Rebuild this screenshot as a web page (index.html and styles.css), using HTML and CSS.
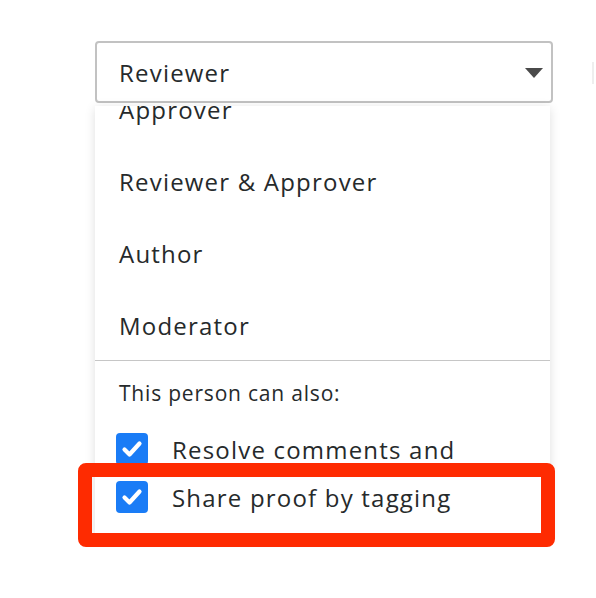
FILE: index.html
```html
<!DOCTYPE html>
<html lang="en">
<head>
    <meta charset="UTF-8">
    <meta name="viewport" content="width=device-width, initial-scale=1.0">
    <title>Role picker</title>
    <link rel="stylesheet" href="styles.css">
</head>
<body>
    <div class="stage">
        <div class="top-row">
            <div class="role-select">
                <span class="role-select-value">Reviewer</span>
                <span class="role-select-arrow"></span>
            </div>
            <div class="edge-stub"></div>
        </div>

        <div class="role-menu">
            <div class="role-list-viewport">
                <ul class="role-list">
                    <li>Approver</li>
                    <li>Reviewer &amp; Approver</li>
                    <li>Author</li>
                    <li>Moderator</li>
                </ul>
            </div>

            <div class="role-extras">
                <p class="extras-title">This person can also:</p>
                <label class="extra-option">
                    <span class="check-box">
                        <svg viewBox="0 0 32 32" width="32" height="32"><polyline points="8.5,16.5 13.5,21.5 23.5,10.5" /></svg>
                    </span>
                    <span>Resolve comments and</span>
                </label>
                <label class="extra-option">
                    <span class="check-box">
                        <svg viewBox="0 0 32 32" width="32" height="32"><polyline points="8.5,16.5 13.5,21.5 23.5,10.5" /></svg>
                    </span>
                    <span>Share proof by tagging</span>
                </label>
            </div>

            <!-- annotation highlight -->
            <div class="highlight"></div>
        </div>
    </div>
</body>
</html>
```

FILE: styles.css
```css
* {
    margin: 0;
    padding: 0;
    box-sizing: border-box;
}

html, body {
    min-height: 100%;
}

body {
    font-family: "Open Sans", Lato, sans-serif;
    background: #ffffff;
    color: #262a2b;
    min-height: 100vh;
}

.stage {
    padding: 41px 0 0 95px;
    min-height: 598px;
}

.top-row {
    display: flex;
    align-items: flex-start;
}

.role-select {
    width: 458px;
    height: 62px;
    border: 2px solid #c2c2c2;
    border-radius: 4px;
    display: flex;
    align-items: center;
    justify-content: space-between;
    padding: 0 8px 0 22px;
}

.role-select-value {
    font-size: 24px;
    letter-spacing: 1.2px;
}

.role-select-arrow {
    width: 0;
    height: 0;
    border-left: 9.5px solid transparent;
    border-right: 9.5px solid transparent;
    border-top: 10px solid #4a4a4a;
    margin-top: 2px;
}

.edge-stub {
    width: 2px;
    height: 22px;
    margin: 21px 0 0 39px;
    background: #eeeeee;
}

.role-menu {
    position: relative;
    width: 455px;
    margin-top: 3px;
    height: 430px;
    background: #ffffff;
    box-shadow: 0 2px 10px rgba(0, 0, 0, 0.13);
}

.role-list-viewport {
    height: 255px;
    overflow: hidden;
    border-bottom: 1px solid #c6c6c6;
}

.role-list {
    list-style: none;
    margin-top: -33px;
}

.role-list li {
    height: 72px;
    display: flex;
    align-items: center;
    padding-left: 24px;
    font-size: 24px;
    letter-spacing: 1.2px;
}

.role-extras {
    padding: 20px 0 0 21px;
}

.extras-title {
    font-size: 21px;
    line-height: 24px;
    letter-spacing: 0.8px;
    padding-left: 3px;
    margin-bottom: 28px;
}

.extra-option {
    display: flex;
    align-items: center;
    gap: 24px;
    height: 32px;
    margin-bottom: 16px;
    font-size: 24px;
    letter-spacing: 1.2px;
}

.check-box {
    width: 32px;
    height: 32px;
    border-radius: 4px;
    background: #1a7cf6;
    display: flex;
}

.check-box polyline {
    fill: none;
    stroke: #ffffff;
    stroke-width: 4.2;
    stroke-linecap: round;
    stroke-linejoin: round;
}

.highlight {
    position: absolute;
    left: -17px;
    top: 357px;
    width: 477px;
    height: 84px;
    border: 14px solid #fe2b01;
    border-radius: 8px;
}
```
